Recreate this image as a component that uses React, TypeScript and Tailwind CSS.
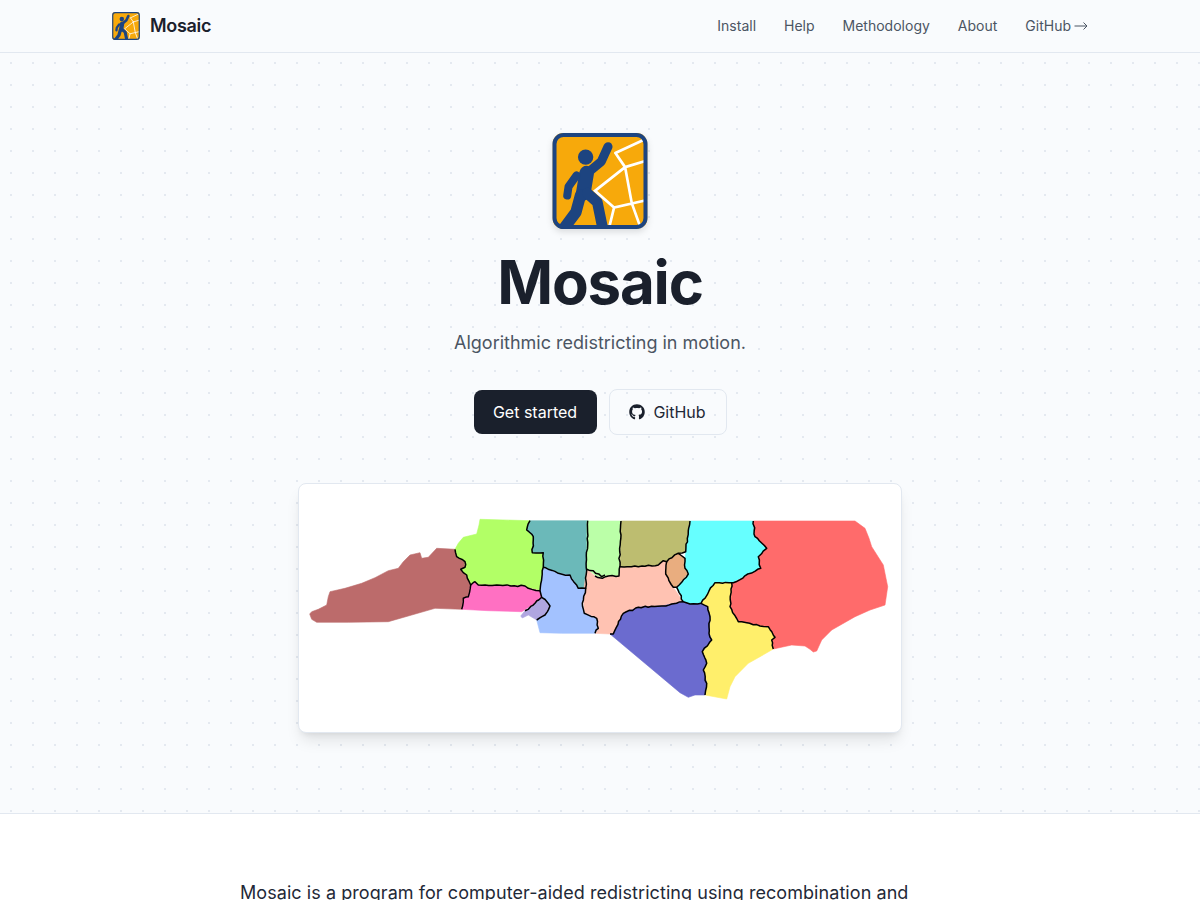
import React from "react";
import { FaGithub } from "react-icons/fa";

type P = [number, number];
const z3 = (a: P[]): P[] => a.map(([x, y]) => [295 + x / 3, 480 + y / 3]);
const z4 = (a: P[]): P[] => a.map(([x, y]) => [595 + x / 3, 500 + y / 3]);
const str = (a: P[]) => a.map(([x, y]) => `${x.toFixed(1)},${y.toFixed(1)}`).join(" ");

function rough(a: P[], seed: number): P[] {
  let s = seed;
  const rnd = () => {
    s = (s * 9301 + 49297) % 233280;
    return s / 233280 - 0.5;
  };
  const out: P[] = [];
  for (let i = 0; i < a.length - 1; i++) {
    const [x0, y0] = a[i];
    const [x1, y1] = a[i + 1];
    const n = Math.max(1, Math.round(Math.hypot(x1 - x0, y1 - y0) / 3.5));
    for (let k = 0; k < n; k++) {
      const t = k / n;
      const j = k === 0 ? 0 : 1;
      out.push([x0 + (x1 - x0) * t + rnd() * 1.5 * j, y0 + (y1 - y0) * t + rnd() * 1.5 * j]);
    }
  }
  out.push(a[a.length - 1]);
  return out;
}

const regions: { c: string; p: P[] }[] = [
  { c: "#bc6b6b", p: z3([[44,402],[50,395],[70,388],[95,375],[100,350],[105,335],[150,325],[200,310],[240,293],[280,272],[310,265],[325,245],[345,225],[375,218],[380,235],[400,232],[425,205],[480,208],[485,230],[510,245],[510,262],[497,268],[515,285],[527,315],[520,350],[505,355],[500,388],[420,385],[350,405],[280,425],[160,427],[65,427],[50,418]]) },
  { c: "#b2ff66", p: z3([[555,118],[705,122],[695,150],[715,170],[712,218],[745,218],[745,262],[735,332],[700,325],[690,318],[550,315],[540,305],[527,315],[515,285],[497,268],[510,262],[510,245],[485,230],[480,208],[490,190],[505,172],[545,162],[552,135]]) },
  { c: "#6bb9b9", p: z3([[705,122],[878,122],[872,325],[850,325],[825,285],[790,280],[745,262],[745,218],[712,218],[715,170],[695,150]]) },
  { c: "#bbffa8", p: [[587,521],[621,521],[619,576],[608,576],[602,578],[595,575],[587,569]] },
  { c: "#ffc2b2", p: [...z3([[875,268],[865,340],[868,400],[905,415],[910,445],[900,460]]), ...z4([[45,402],[55,402],[85,340],[130,322],[200,318],[265,305],[235,262],[212,222],[215,185],[205,182],[190,195],[130,200],[75,200],[72,228],[40,228],[22,235],[0,228]])] },
  { c: "#a3c2ff", p: z3([[745,262],[790,280],[825,285],[850,325],[872,325],[862,370],[868,400],[905,415],[910,445],[900,460],[800,460],[735,458],[725,420],[750,405],[765,378],[740,352],[735,332]]) },
  { c: "#ff70c2", p: z3([[527,315],[540,305],[550,315],[690,318],[700,325],[735,332],[740,352],[720,370],[680,395],[580,392],[500,388],[505,355],[520,350]]) },
  { c: "#b0a6e0", p: z3([[740,352],[765,378],[750,405],[725,420],[700,405],[682,414],[677,408],[690,392],[720,370]]) },
  { c: "#bdbd70", p: z4([[78,63],[285,63],[272,155],[250,160],[215,185],[205,182],[190,195],[130,200],[75,200]]) },
  { c: "#e9ad7f", p: z4([[250,160],[270,175],[270,205],[280,222],[245,262],[235,262],[212,222],[215,185]]) },
  { c: "#66ffff", p: z4([[285,63],[475,63],[480,110],[515,145],[490,170],[497,205],[415,248],[360,248],[318,310],[285,312],[265,305],[245,262],[280,222],[270,205],[270,175],[272,155]]) },
  { c: "#ff6b6b", p: z4([[475,63],[780,63],[810,85],[822,115],[830,140],[865,195],[878,260],[870,315],[825,330],[780,350],[710,390],[680,420],[665,453],[655,456],[645,448],[630,438],[590,435],[535,447],[530,420],[540,412],[520,380],[495,378],[430,365],[405,320],[410,248],[415,248],[497,205],[490,170],[515,145],[480,110]]) },
  { c: "#ffef6b", p: z4([[360,248],[410,248],[405,320],[430,365],[495,378],[520,380],[540,412],[530,420],[535,447],[495,470],[460,490],[420,530],[405,560],[395,597],[330,585],[335,550],[325,510],[335,490],[322,455],[350,420],[342,400],[345,350],[338,320],[318,310]]) },
  { c: "#6b6bcf", p: z4([[265,305],[285,312],[318,310],[338,320],[345,350],[342,400],[350,420],[322,455],[335,490],[325,510],[335,550],[330,585],[300,585],[280,592],[255,578],[45,402],[55,402],[85,340],[130,322],[200,318]]) },
];

const borders: P[][] = [
  z3([[480,208],[485,230],[510,245],[510,262],[497,268],[515,285],[527,315],[520,350],[505,355],[500,388]]),
  z3([[527,315],[540,305],[550,315],[690,318],[700,325],[735,332],[745,262],[745,218],[712,218],[715,170],[695,150],[705,122]]),
  z3([[745,262],[790,280],[825,285],[850,325],[872,325],[878,122]]),
  z3([[735,332],[740,352],[765,378],[750,405],[725,420]]),
  z3([[740,352],[720,370],[690,392]]),
  z3([[875,268],[895,272],[920,290],[930,285]]),
  z3([[872,325],[862,370],[868,400],[905,415],[910,445],[900,460]]),
  z4([[78,63],[72,228],[40,228],[22,235],[0,228]]),
  z4([[75,200],[130,200],[190,195],[205,182],[215,185],[250,160],[272,155],[285,63]]),
  z4([[215,185],[212,222],[235,262],[245,262],[280,222],[270,205],[270,175],[250,160]]),
  z4([[245,262],[265,305],[285,312],[318,310],[360,248],[415,248],[497,205],[490,170],[515,145],[480,110],[475,63]]),
  z4([[45,402],[55,402],[85,340],[130,322],[200,318],[265,305]]),
  z4([[318,310],[338,320],[345,350],[342,400],[350,420],[322,455],[335,490],[325,510],[335,550],[330,585]]),
  z4([[410,248],[405,320],[430,365],[495,378],[520,380],[540,412],[530,420],[535,447]]),
];

function Logo({ className, id }: { className: string; id: string }) {
  return (
    <svg viewBox="38 25 284 287" className={className}>
      <defs>
        <clipPath id={id}>
          <rect x="38" y="25" width="284" height="287" rx="32" />
        </clipPath>
      </defs>
      <g clipPath={`url(#${id})`}>
        <rect x="38" y="25" width="284" height="287" fill="#f7a90b" />
        <g stroke="#ffffff" strokeWidth="8" fill="none" strokeLinecap="round">
          <path d="M226 85L318 42M226 85L255 127M255 127L318 108M255 127L165 198L222 248L318 226M222 248L208 305M255 127L275 235L302 310" />
        </g>
        <circle cx="137" cy="97" r="23" fill="#1d4480" />
        <g stroke="#1d4480" fill="none" strokeLinecap="round" strokeLinejoin="round">
          <path d="M204 66L184 110L148 140" strokeWidth="27" />
          <path d="M140 145L130 205" strokeWidth="44" />
          <path d="M110 152L86 185L82 212" strokeWidth="24" />
          <path d="M122 210L108 262L72 310" strokeWidth="34" />
          <path d="M142 205L172 232L188 310" strokeWidth="32" />
        </g>
      </g>
      <rect x="44" y="31" width="272" height="275" rx="27" fill="none" stroke="#1d4480" strokeWidth="12" />
    </svg>
  );
}

const links = ["Install", "Help", "Methodology", "About"];

export default function App() {
  return (
    <div className="h-screen overflow-hidden bg-white font-['Inter',sans-serif] text-[#1a202c]">
      <header className="h-[53px] border-b border-[#e2e8f0] bg-[#f9fbfd]">
        <div className="mx-auto flex h-[52px] w-[976px] items-center justify-between">
          <div className="flex items-center gap-[10px]">
            <Logo id="logo-small" className="h-7 w-7" />
            <span className="text-lg font-semibold tracking-[-0.3px] text-[#1a202c]">Mosaic</span>
          </div>
          <nav className="flex items-center gap-7 text-sm text-[#4b5563]">
            {links.map((l) => (
              <a key={l}>{l}</a>
            ))}
            <a className="flex items-center gap-[3px]">
              GitHub
              <svg viewBox="0 0 14 10" className="h-[10px] w-[14px]" fill="none" stroke="#4b5563" strokeWidth="1">
                <path d="M0.5 5H13M9.5 1.5L13 5L9.5 8.5" />
              </svg>
            </a>
          </nav>
        </div>
      </header>
      <section className="h-[761px] border-b border-[#e2e8f0] bg-[#f9fbfd] bg-[radial-gradient(#e4e9f0_1px,transparent_1px)] bg-[size:22px_22px] bg-[position:0px_-1px]">
        <div className="flex flex-col items-center pt-20">
          <Logo id="logo-big" className="h-24 w-24 drop-shadow-md" />
          <h1 className="mt-4 text-[60px] leading-[75px] font-bold tracking-[-1.2px] text-[#1a202c]">Mosaic</h1>
          <p className="mt-[9px] text-lg leading-7 text-[#4b5563]">Algorithmic redistricting in motion.</p>
          <div className="mt-8 flex items-center gap-3">
            <a className="flex h-11 w-[123px] items-center justify-center rounded-lg bg-[#1a202c] font-normal text-white">Get started</a>
            <a className="flex h-[46px] w-[118px] items-center justify-center gap-2 rounded-lg border border-[#e2e8f0] font-normal text-[#1f2937]">
              <FaGithub className="h-4 w-4 text-[#1a202c]" />
              GitHub
            </a>
          </div>
          <div className="mt-[48px] h-[250px] w-[604px] overflow-hidden rounded-lg border border-[#e2e8f0] bg-white shadow-lg">
            <svg viewBox="299 484 602 248" className="block h-[248px] w-[602px]">
              {regions.map((r, i) => (
                <polygon key={i} points={str(r.p)} fill={r.c} stroke={r.c} strokeWidth="0.6" strokeLinejoin="round" />
              ))}
              {borders.map((b, i) => (
                <polyline key={i} points={str(rough(b, i * 37 + 11))} fill="none" stroke="#000" strokeWidth="1.5" strokeLinejoin="round" />
              ))}
            </svg>
          </div>
        </div>
      </section>
      <section className="mx-auto w-[720px] pt-[65px]">
        <p className="text-lg leading-7 tracking-[0.065px] text-[#1f2937]">Mosaic is a program for computer-aided redistricting using recombination and</p>
      </section>
    </div>
  );
}
